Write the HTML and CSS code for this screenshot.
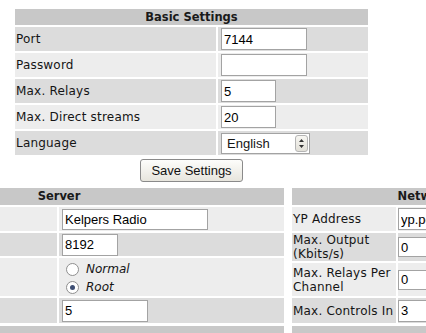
FILE: index.html
```html
<!DOCTYPE html>
<html lang="en">
<head>
    <meta charset="UTF-8">
    <title>Settings</title>
    <link rel="stylesheet" href="styles.css">
</head>
<body>
    <div class="basic">
        <div class="head">Basic Settings</div>
        <div class="row dark">
            <div class="cell label">Port</div>
            <div class="cell value"><input class="text w86" value="7144"></div>
        </div>
        <div class="row light">
            <div class="cell label">Password</div>
            <div class="cell value"><input class="text w86" type="password"></div>
        </div>
        <div class="row dark">
            <div class="cell label">Max. Relays</div>
            <div class="cell value"><input class="text w55" value="5"></div>
        </div>
        <div class="row light">
            <div class="cell label">Max. Direct streams</div>
            <div class="cell value"><input class="text w55" value="20"></div>
        </div>
        <div class="row dark">
            <div class="cell label">Language</div>
            <div class="cell value">
                <div class="select">
                    <span>English</span>
                    <span class="spin">
                        <svg width="7" height="9" viewBox="0 0 7 9"><path d="M3.5 0L6 3H1z M1 6h5L3.5 9z" fill="#333"/></svg>
                    </span>
                </div>
            </div>
        </div>
    </div>

    <div class="actions">
        <button class="btn">Save Settings</button>
    </div>

    <div class="panels">
        <div class="panel server">
            <div class="head">Server</div>
            <div class="row light r1">
                <div class="cell label"></div>
                <div class="cell value"><input class="text name" value="Kelpers Radio"></div>
            </div>
            <div class="row dark r2">
                <div class="cell label"></div>
                <div class="cell value"><input class="text port" value="8192"></div>
            </div>
            <div class="row light r3">
                <div class="cell label"></div>
                <div class="cell value radios">
                    <label class="radio"><span class="dot"></span><i>Normal</i></label>
                    <label class="radio"><span class="dot on"></span><i>Root</i></label>
                </div>
            </div>
            <div class="row dark r4">
                <div class="cell label"></div>
                <div class="cell value"><input class="text w86" value="5"></div>
            </div>
        </div>

        <div class="panel network">
            <div class="head">Network</div>
            <div class="row light n1">
                <div class="cell label">YP Address</div>
                <div class="cell value"><input class="text yp" value="yp.peercast.org"></div>
            </div>
            <div class="row dark n2">
                <div class="cell label">Max. Output<br>(Kbits/s)</div>
                <div class="cell value"><input class="text w55" value="0"></div>
            </div>
            <div class="row light n3">
                <div class="cell label">Max. Relays Per<br>Channel</div>
                <div class="cell value"><input class="text w55" value="0"></div>
            </div>
            <div class="row dark n4">
                <div class="cell label">Max. Controls In</div>
                <div class="cell value"><input class="text w55" value="3"></div>
            </div>
        </div>
    </div>

    <div class="panels next">
        <div class="panel server"><div class="head"></div></div>
        <div class="panel network"><div class="head"></div></div>
    </div>
</body>
</html>
```

FILE: styles.css
```css
html, body {
    overflow: hidden;
}

body {
    margin: 0;
    background: #fff;
    color: #151515;
    font-family: 'DejaVu Sans', Verdana, sans-serif;
    font-size: 12px;
    letter-spacing: 0.2px;
}

.row {
    display: contents;
}

.dark .cell {
    background: #dcdcdc;
}

.light .cell {
    background: #ededed;
}

.head {
    grid-column: 1 / -1;
    height: 16px;
    line-height: 16px;
    background: #c8c8c8;
    text-align: center;
    font-weight: bold;
    font-size: 11.5px;
    letter-spacing: 0;
    color: #1a1a1a;
}

.cell {
    display: flex;
    align-items: center;
}

.label {
    padding-left: 1px;
    white-space: nowrap;
}

.value {
    padding-left: 3px;
    letter-spacing: 0;
}

/* basic settings block */
.basic {
    display: grid;
    grid-template-columns: 201px 1fr;
    gap: 2px;
    width: 353px;
    margin: 9px 0 0 15px;
}

.basic .cell {
    height: 24px;
}

.text {
    box-sizing: border-box;
    height: 22px;
    border: 1px solid #a3a3a3;
    padding: 0 2px;
    margin: 0;
    font-family: 'Liberation Sans', Arial, sans-serif;
    font-size: 13px;
    color: #000;
    background: #fff;
}

.w86 { width: 86px; }
.w55 { width: 55px; }

.select {
    box-sizing: border-box;
    display: flex;
    align-items: center;
    justify-content: space-between;
    width: 89px;
    height: 21px;
    padding: 0 1px 0 5px;
    border: 1px solid #a3a3a3;
    background: #fff;
    font-family: 'Liberation Sans', Arial, sans-serif;
    font-size: 13px;
}

.spin {
    display: flex;
    align-items: center;
    justify-content: center;
    width: 13px;
    height: 17px;
    border: 1px solid #b4b4b4;
    border-radius: 3px;
    background: linear-gradient(#f7f6f2, #e2e0d8);
    box-sizing: border-box;
}

.actions {
    width: 353px;
    margin: 4px 0 0 15px;
    text-align: center;
}

.btn {
    width: 103px;
    height: 23px;
    padding: 0;
    border: 1px solid #8a8a8a;
    border-radius: 3px;
    background: linear-gradient(#fdfdfb, #e7e5dd);
    font-family: 'Liberation Sans', Arial, sans-serif;
    font-size: 13px;
    color: #111;
}

/* lower panels */
.panels {
    display: flex;
    gap: 8px;
    margin: 6px 0 0 -166px;
}

.panel {
    display: grid;
    gap: 2px;
    align-content: start;
    flex-shrink: 0;
}

.panels .head {
    height: 17px;
    line-height: 17px;
}

.server {
    width: 450px;
    grid-template-columns: 223px 1fr;
}

.network {
    width: 266px;
    grid-template-columns: 104px 1fr;
}

.network .label {
    padding-left: 1px;
    line-height: 14px;
}

.network .value {
    padding-left: 0;
}

.r1 .cell { height: 24px; }
.r2 .cell { height: 23px; }
.r3 .cell { height: 38px; }
.r4 .cell { height: 25px; }

.n1 .cell { height: 24px; }
.n2 .cell { height: 28px; }
.n3 .cell { height: 33px; }
.n4 .cell { height: 25px; }

.name {
    width: 146px;
    height: 21px;
}

.port {
    width: 56px;
    height: 22px;
}

.yp {
    width: 120px;
}

.n2 .text,
.n3 .text {
    height: 20px;
}

.radios {
    flex-direction: column;
    align-items: flex-start;
    justify-content: center;
    padding-left: 7px;
    padding-top: 2px;
    box-sizing: border-box;
}

.radio {
    display: flex;
    align-items: center;
    gap: 7px;
    height: 18px;
}

.radio i {
    font-style: italic;
}

.dot {
    box-sizing: border-box;
    width: 13px;
    height: 13px;
    border: 1px solid #8f8f8f;
    border-radius: 50%;
    background: #fff;
    display: flex;
    align-items: center;
    justify-content: center;
}

.dot.on::after {
    content: "";
    width: 5px;
    height: 5px;
    border-radius: 50%;
    background: #3d4e73;
}

.next {
    margin-top: 3px;
}
```
